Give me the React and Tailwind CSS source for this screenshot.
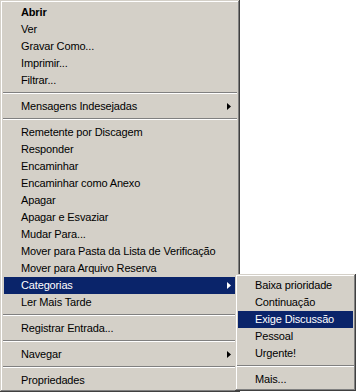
import React from 'react';

// Classic 3D menu frame: outer light / inner white on top-left, inner grey / outer dark on bottom-right
const frame =
    'bg-[#d4d0c8] shadow-[inset_-1px_-1px_0_#404040,inset_1px_1px_0_#d4d0c8,inset_-2px_-2px_0_#808080,inset_2px_2px_0_#ffffff]';

const mainItems = [
    { label: 'Abrir', bold: true },
    { label: 'Ver' },
    { label: 'Gravar Como...' },
    { label: 'Imprimir...' },
    { label: 'Filtrar...' },
    { sep: true },
    { label: 'Mensagens Indesejadas', sub: true },
    { sep: true },
    { label: 'Remetente por Discagem' },
    { label: 'Responder' },
    { label: 'Encaminhar' },
    { label: 'Encaminhar como Anexo' },
    { label: 'Apagar' },
    { label: 'Apagar e Esvaziar' },
    { label: 'Mudar Para...' },
    { label: 'Mover para Pasta da Lista de Verificação' },
    { label: 'Mover para Arquivo Reserva' },
    { label: 'Categorias', sub: true, active: true },
    { label: 'Ler Mais Tarde' },
    { sep: true },
    { label: 'Registrar Entrada...' },
    { sep: true },
    { label: 'Navegar', sub: true },
    { sep: true },
    { label: 'Propriedades' },
];

const subItems = [
    { label: 'Baixa prioridade' },
    { label: 'Continuação' },
    { label: 'Exige Discussão', active: true },
    { label: 'Pessoal' },
    { label: 'Urgente!' },
    { sep: true },
    { label: 'Mais...' },
];

const Arrow = ({ active }) => (
    <svg width="4" height="7" viewBox="0 0 4 7" className="mr-[5px]">
        <polygon points="0,0 4,3.5 0,7" fill={active ? '#ffffff' : '#000000'} />
    </svg>
);

const MenuRow = ({ item }) => {
    if (item.sep) {
        return (
            <div className="h-[9px] pt-[3px] -mx-px">
                <div className="border-t border-t-[#808080] border-b border-b-white" />
            </div>
        );
    }
    return (
        <div
            className={`h-[17px] leading-[17px] pl-[17px] flex items-center justify-between whitespace-nowrap ${
                item.active ? 'bg-[#0a246a] text-white' : 'text-black'
            } ${item.bold ? 'font-bold' : ''}`}
        >
            <span>{item.label}</span>
            {item.sub && <Arrow active={item.active} />}
        </div>
    );
};

export default function App() {
    return (
        <div
            className="relative w-[356px] h-[392px] bg-white text-[11px] tracking-[-0.15px] overflow-hidden"
            style={{ fontFamily: '"Liberation Sans", Arial, sans-serif' }}
        >
            {/* Main context menu */}
            <div className={`w-[240px] h-[392px] pt-[4px] pb-[3px] px-[4px] ${frame}`}>
                {mainItems.map((item, i) => (
                    <MenuRow key={i} item={item} />
                ))}
            </div>

            {/* Categorias submenu */}
            <div className={`absolute left-[235px] top-[274px] w-[121px] pt-[3px] pb-[3px] px-[3px] ${frame}`}>
                {subItems.map((item, i) => (
                    <MenuRow key={i} item={item} />
                ))}
            </div>
        </div>
    );
}
